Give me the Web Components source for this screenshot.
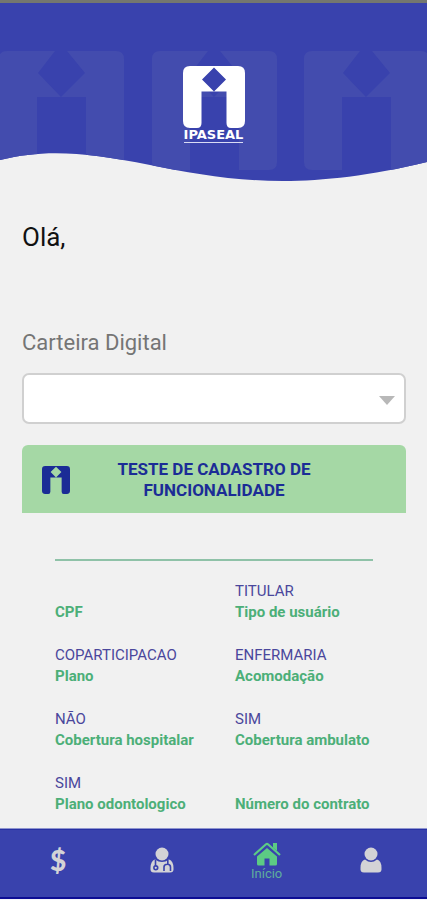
<!DOCTYPE html>
<html lang="pt-BR">
<head>
<meta charset="UTF-8">
<meta name="viewport" content="width=device-width, initial-scale=1">
<title>IPASEAL</title>
<style>
    :root {
        --blue: #3942ad;
        --blue-ghost: #434cae;
        --navy: #1b2c96;
        --green: #4caf78;
        --page: #f1f1f1;
    }
    html, body {
        margin: 0;
        height: 100%;
    }
    body {
        font-family: Roboto, "Liberation Sans", sans-serif;
        background: var(--page);
    }
</style>
</head>
<body>
<app-shell>
    <wave-header slot="header">IPASEAL</wave-header>
    <user-greeting>Olá,</user-greeting>
    <card-picker label="Carteira Digital"></card-picker>
    <digital-card name="TESTE DE CADASTRO DE FUNCIONALIDADE">
        <card-field label="CPF"></card-field>
        <card-field label="Tipo de usuário">TITULAR</card-field>
        <card-field label="Plano">COPARTICIPACAO</card-field>
        <card-field label="Acomodação">ENFERMARIA</card-field>
        <card-field label="Cobertura hospitalar">NÃO</card-field>
        <card-field label="Cobertura ambulato">SIM</card-field>
        <card-field label="Plano odontologico">SIM</card-field>
        <card-field label="Número do contrato"></card-field>
    </digital-card>
    <tab-bar slot="footer">
        <tab-item icon="money" hint="Financeiro"></tab-item>
        <tab-item icon="doctor" hint="Médicos"></tab-item>
        <tab-item icon="home" active>Início</tab-item>
        <tab-item icon="user" hint="Perfil"></tab-item>
    </tab-bar>
</app-shell>

<script>
// ── Page shell: header, scrolling content, tab bar ────────────────────────────
class AppShell extends HTMLElement {
    constructor() {
        super();
        this.attachShadow({ mode: 'open' }).innerHTML = `
            <style>
                :host {
                    display: flex;
                    flex-direction: column;
                    height: 100vh;
                    box-sizing: border-box;
                    border-top: 3px solid #74776f;
                    border-bottom: 1px solid #f4f4fb;
                }
                main {
                    flex: 1;
                    min-height: 0;
                    overflow: hidden auto;
                    scrollbar-width: none;
                    padding: 39px 21px 0 22px;
                }
            </style>
            <slot name="header"></slot>
            <main><slot></slot></main>
            <slot name="footer"></slot>
        `;
    }
}
customElements.define('app-shell', AppShell);

// ── Brand mark: rounded block with the "i" figure cut out ─────────────────────
class BrandMark extends HTMLElement {
    constructor() {
        super();
        this.attachShadow({ mode: 'open' }).innerHTML = `
            <style>
                :host { display: block; width: 62px; height: 62px; }
                svg { display: block; width: 100%; height: 100%; fill: currentColor; }
            </style>
            <svg viewBox="0 0 62 62" aria-hidden="true">
                <path d="M7 0H31V1.500L19 13.500L31 25.500H18.500V57Q18.500 62 14 62H7Q0 62 0 55V7Q0 0 7 0Z"/>
                <path d="M55 0H31V1.500L43 13.500L31 25.500H43.500V57Q43.500 62 48 62H55Q62 62 62 55V7Q62 0 55 0Z"/>
            </svg>
        `;
    }
}
customElements.define('brand-mark', BrandMark);

// ── Header with the wave edge ─────────────────────────────────────────────────
class WaveHeader extends HTMLElement {
    constructor() {
        super();
        const ghost = (x) => `
            <path transform="translate(${x} 48)" d="M8 0H56L39 22L62 46H38V119H8Q0 119 0 111V8Q0 0 8 0Z
                M117 0H68L86 22L62 46H87V119H117Q125 119 125 111V8Q125 0 117 0Z"/>`;

        this.attachShadow({ mode: 'open' }).innerHTML = `
            <style>
                :host {
                    display: grid;
                    flex: none;
                }
                .wave, .brand { grid-area: 1 / 1; }
                .wave {
                    display: block;
                    width: 100%;
                    height: 179px;
                }
                .base { fill: var(--blue); }
                .ghosts { fill: var(--blue-ghost); }
                .brand {
                    display: flex;
                    flex-direction: column;
                    align-items: center;
                    padding-top: 63px;
                    color: #fff;
                }
                .name {
                    font: 700 13px/14px "DejaVu Sans", sans-serif;
                    border-bottom: 1px solid #d9dbf5;
                }
            </style>
            <svg class="wave" viewBox="0 0 427 179" preserveAspectRatio="none" aria-hidden="true">
                <clipPath id="edge">
                    <path d="M0 0H427V159C300 190 225 177 150 162C85 149 45 146 0 157Z"/>
                </clipPath>
                <g clip-path="url(#edge)">
                    <rect class="base" width="427" height="179"/>
                    <g class="ghosts">${ghost(-1)}${ghost(152)}${ghost(304)}</g>
                </g>
            </svg>
            <div class="brand">
                <brand-mark></brand-mark>
                <span class="name"><slot></slot></span>
            </div>
        `;
    }
}
customElements.define('wave-header', WaveHeader);

class UserGreeting extends HTMLElement {
    constructor() {
        super();
        this.attachShadow({ mode: 'open' }).innerHTML = `
            <style>
                :host { display: block; }
                h1 {
                    margin: 0;
                    font-size: 26px;
                    line-height: 32px;
                    font-weight: 400;
                    color: #111;
                }
            </style>
            <h1><slot></slot></h1>
        `;
    }
}
customElements.define('user-greeting', UserGreeting);

// ── Card drop-down ────────────────────────────────────────────────────────────
class CardPicker extends HTMLElement {
    constructor() {
        super();
        this.attachShadow({ mode: 'open' }).innerHTML = `
            <style>
                :host {
                    display: flex;
                    flex-direction: column;
                    gap: 16px;
                    margin-top: 76px;
                }
                label {
                    font-size: 22px;
                    line-height: 28px;
                    color: #757575;
                }
                .box { display: grid; align-items: center; }
                select, svg { grid-area: 1 / 1; }
                select {
                    appearance: none;
                    width: 100%;
                    height: 51px;
                    margin: 0;
                    padding: 0 36px 0 12px;
                    border: 2px solid #d0d0d0;
                    border-radius: 7px;
                    background: #fff;
                    font: inherit;
                    font-size: 17px;
                }
                svg {
                    justify-self: end;
                    margin: 4px 11px 0 0;
                    fill: #b8b8b8;
                    pointer-events: none;
                }
            </style>
            <label for="card"></label>
            <div class="box">
                <select id="card"><option value=""></option></select>
                <svg width="16" height="9" viewBox="0 0 16 9" aria-hidden="true"><path d="M0 0H16L8 9Z"/></svg>
            </div>
        `;
    }

    connectedCallback() {
        this.shadowRoot.querySelector('label').textContent = this.getAttribute('label');
    }
}
customElements.define('card-picker', CardPicker);

// ── Digital card: banner and field grid ───────────────────────────────────────
class DigitalCard extends HTMLElement {
    constructor() {
        super();
        this.attachShadow({ mode: 'open' }).innerHTML = `
            <style>
                :host { display: block; margin-top: 21px; }
                header {
                    display: grid;
                    grid-template-columns: 28px 1fr 28px;
                    gap: 32px;
                    align-items: center;
                    padding: 14px 20px 12px;
                    border-radius: 6px 6px 0 0;
                    background: #a5d8a5;
                    color: var(--navy);
                }
                brand-mark { width: 28px; height: 28px; }
                h2 {
                    margin: 0;
                    font-size: 17px;
                    line-height: 21px;
                    font-weight: 700;
                    text-align: center;
                }
                section {
                    display: grid;
                    grid-template-columns: 1fr 1fr;
                    gap: 22px 42px;
                    margin: 46px 33px 0;
                    padding-top: 20px;
                    border-top: 2px solid #8fc2a8;
                }
            </style>
            <header>
                <brand-mark></brand-mark>
                <h2></h2>
            </header>
            <section><slot></slot></section>
        `;
    }

    connectedCallback() {
        this.shadowRoot.querySelector('h2').textContent = this.getAttribute('name');
    }
}
customElements.define('digital-card', DigitalCard);

class CardField extends HTMLElement {
    constructor() {
        super();
        this.attachShadow({ mode: 'open' }).innerHTML = `
            <style>
                :host {
                    display: grid;
                    grid-template-rows: 21px 21px;
                    min-width: 0;
                    font-size: 15px;
                    line-height: 21px;
                    white-space: nowrap;
                }
                .value { color: #4a479c; }
                .label { color: var(--green); font-weight: 700; }
            </style>
            <span class="value"><slot></slot></span>
            <span class="label"></span>
        `;
    }

    connectedCallback() {
        this.shadowRoot.querySelector('.label').textContent = this.getAttribute('label');
    }
}
customElements.define('card-field', CardField);

// ── Bottom tab bar ────────────────────────────────────────────────────────────
class TabBar extends HTMLElement {
    constructor() {
        super();
        this.attachShadow({ mode: 'open' }).innerHTML = `
            <style>
                :host {
                    display: block;
                    flex: none;
                    background: var(--blue);
                    border-top: 1px solid #8f95cf;
                    border-bottom: 2px solid #0c0c94;
                }
                nav {
                    display: grid;
                    grid-template-columns: repeat(4, 1fr);
                    height: 68px;
                    padding: 0 4px 0 6px;
                    box-sizing: border-box;
                    border-top: 1px solid #2730a3;
                }
            </style>
            <nav><slot></slot></nav>
        `;
    }
}
customElements.define('tab-bar', TabBar);

const ICONS = {
    doctor: `<svg width="24" height="26" viewBox="0 0 24 26">
        <circle cx="12" cy="7" r="6.500"/>
        <path d="M5 12.500Q0.500 14 0.500 21Q0 25.500 4 25.500H20Q24 25.500 23.500 21Q23.500 14 19 12.500Q12 17.500 5 12.500Z"/>
        <g fill="none" stroke="#3942ad" stroke-width="1.600">
            <path d="M5.500 13V19"/><circle cx="5.800" cy="20.800" r="1.900"/>
            <path d="M17.800 13V17M14 24V20Q14 17.200 17.300 17.200Q20.500 17.200 20.500 20V24"/>
        </g></svg>`,
    home: `<svg width="28" height="24" viewBox="0 0 28 24">
        <path d="M14 6L4 14.500V22Q4 23.500 5.500 23.500H11.500V16.500H16.500V23.500H22.500Q24 23.500 24 22V14.500Z"/>
        <path d="M1 13L13 2.300Q14 1.500 15 2.300L27 13" fill="none" stroke="currentColor" stroke-width="2.200"/>
        <path d="M20 1H24V9L20 5.500Z"/></svg>`,
    user: `<svg width="22" height="26" viewBox="0 0 22 26">
        <circle cx="11" cy="7" r="6.500"/>
        <path d="M5 12.500Q0.500 13.500 0.500 21Q0 25.500 4 25.500H18Q22 25.500 21.500 21Q21.500 13.500 17 12.500Q11 17.500 5 12.500Z"/></svg>`,
    money: `<span class="sign">$</span>`,
};

class TabItem extends HTMLElement {
    connectedCallback() {
        if (this.shadowRoot) return;
        const hint = this.getAttribute('hint');
        this.attachShadow({ mode: 'open' }).innerHTML = `
            <style>
                :host { display: grid; color: #d3d3d6; }
                :host([active]) { color: #5ccb84; }
                button {
                    display: flex;
                    flex-direction: column;
                    align-items: center;
                    justify-content: center;
                    padding: 0 0 8px;
                    border: 0;
                    background: none;
                    color: inherit;
                    font: inherit;
                    font-size: 13px;
                    line-height: 16px;
                    cursor: pointer;
                }
                :host([active]) button { padding-bottom: 4px; }
                svg { display: block; fill: currentColor; }
                .text { color: #5fae9c; }
                .sign {
                    font: 900 28px/30px Lato, "Liberation Sans", sans-serif;
                }
            </style>
            <button type="button" ${hint ? `aria-label="${hint}"` : ''}>
                ${ICONS[this.getAttribute('icon')]}
                <span class="text"><slot></slot></span>
            </button>
        `;
    }
}
customElements.define('tab-item', TabItem);
</script>
</body>
</html>
